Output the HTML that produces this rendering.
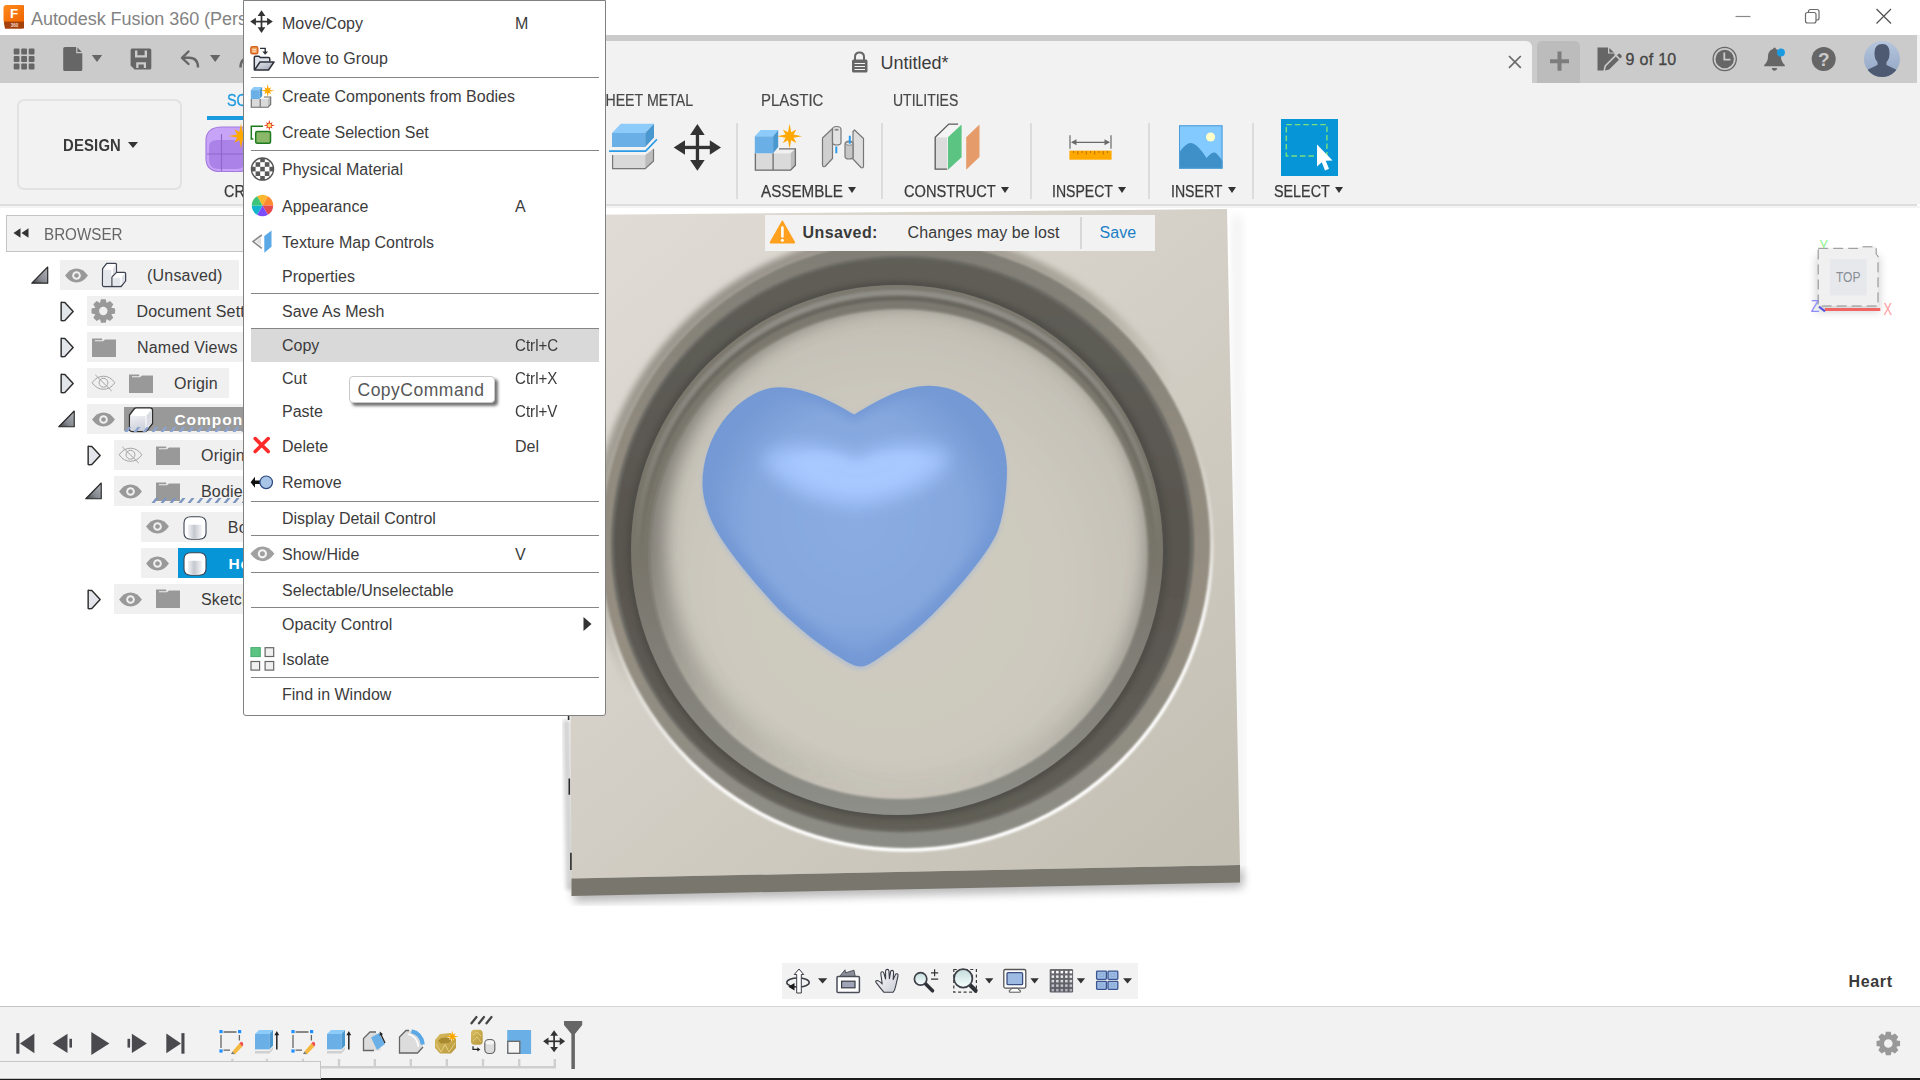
<!DOCTYPE html>
<html lang="en">
<head>
<meta charset="utf-8">
<title>Autodesk Fusion 360</title>
<style>
html,body{margin:0;padding:0;}
body{width:1920px;height:1080px;position:relative;overflow:hidden;background:#fff;font-family:"Liberation Sans",sans-serif;color:#3c3c3c;}
.abs{position:absolute;}
.t{position:absolute;white-space:nowrap;line-height:1;}
svg{position:absolute;overflow:visible;}
/* title bar */
#titlebar{left:0;top:0;width:1920px;height:35px;background:#fff;}
#qat{left:0;top:35px;width:1917px;height:48px;background:#cbcbcb;}
#tab{left:300px;top:41px;width:1232px;height:42px;background:#f2f2f2;border-radius:6px 6px 0 0;}
#plus{left:1537px;top:41px;width:43px;height:42px;background:#bcbcbc;border-radius:5px 5px 0 0;}
#ribbon{left:0;top:83px;width:1920px;height:121px;background:#f2f2f2;}
#ribline{left:0;top:204px;width:1917px;height:2px;background:#dedede;}
#ribline2{left:0;top:206px;width:1920px;height:2px;background:#f4f4f4;}
.rl{position:absolute;font-size:16px;line-height:1;white-space:nowrap;color:#3a3a3a;}
.sep{position:absolute;width:2px;background:#dcdcdc;top:123px;height:76px;}
.tri{position:absolute;width:0;height:0;border-left:4.5px solid transparent;border-right:4.5px solid transparent;border-top:6px solid #333;}
/* browser */
.brow{position:absolute;height:30px;background:#f0f0f0;}
.bt{position:absolute;font-size:16px;line-height:1;white-space:nowrap;color:#3a3a3a;letter-spacing:0.2px;}
/* menu */
#menu{left:243px;top:0;width:361px;height:714px;background:#fff;border:1px solid #808080;box-sizing:content-box;border-radius:0 0 3px 3px;}
.mi{position:absolute;left:282px;font-size:16px;line-height:1;white-space:nowrap;color:#3c3c3c;}
.ms{position:absolute;left:515px;font-size:16px;line-height:1;white-space:nowrap;color:#3c3c3c;}
.msep{position:absolute;left:250.5px;width:348px;height:1px;background:#858585;}
/* timeline */
#timeline{left:0;top:1006px;width:1920px;height:72px;background:#f2f2f2;}
#tlline{left:0;top:1006px;width:1920px;height:1px;background:#d6d6d6;}
#bottom{left:0;top:1077.5px;width:1920px;height:3px;background:#1c1c1c;}
</style>
</head>
<body>
<!--BASE-->
<div id="titlebar" class="abs"></div>
<div id="qat" class="abs"></div>
<div class="abs" style="left:1917px;top:35px;width:3px;height:48px;background:#f2f2f2"></div>
<div id="tab" class="abs"></div>
<div id="plus" class="abs"></div>
<div id="ribbon" class="abs"></div>
<div id="ribline" class="abs"></div>
<div id="ribline2" class="abs"></div>
<!--TITLE-->
<svg style="left:3px;top:4px" width="22" height="25" viewBox="0 0 22 25">
<defs><linearGradient id="gF" x1="0" y1="0" x2="1" y2="1"><stop offset="0" stop-color="#ff8a1c"/><stop offset="1" stop-color="#f06400"/></linearGradient></defs>
<path d="M1 5 L4 1.5 L21 1.5 L21 20 L19 24.5 L2 24.5 L1 20 Z" fill="#b5480a"/>
<path d="M0.5 4 Q0.5 1 3.5 1 L18 1 Q21 1 21 4 L21 17.5 L0.5 17.5 Z" fill="url(#gF)"/>
<rect x="2" y="18" width="19" height="6.5" fill="#a3400c"/>
<text x="11.2" y="14.2" font-family="Liberation Sans, sans-serif" font-weight="700" font-size="13.5" fill="#fff" text-anchor="middle">F</text>
<text x="11.5" y="23.3" font-family="Liberation Sans, sans-serif" font-weight="700" font-size="4.6" fill="#f3d9c8" text-anchor="middle">360</text>
</svg>
<div class="t" id="ttl" style="left:31px;top:9.5px;font-size:18px;color:#838383;letter-spacing:-0.05px">Autodesk Fusion 360 (Personal)</div>
<svg style="left:1730px;top:0" width="190" height="35" viewBox="0 0 190 35">
<path d="M5.5 16.5 H20.5" stroke="#8a8a8a" stroke-width="1.2" fill="none"/>
<rect x="75.5" y="12.5" width="10.5" height="10.5" rx="2" fill="none" stroke="#6a6a6a" stroke-width="1.2"/>
<path d="M78.5 12.5 V11.5 Q78.5 9.5 80.5 9.5 H87 Q89 9.5 89 11.5 V18 Q89 20 87 20 H86" fill="none" stroke="#6a6a6a" stroke-width="1.2"/>
<path d="M146.5 9 L161 23.5 M161 9 L146.5 23.5" stroke="#555" stroke-width="1.3" fill="none"/>
</svg>
<!--/TITLE-->
<!--QAT-->
<svg style="left:0;top:35px" width="260" height="48" viewBox="0 35 260 48">
<rect x="13.7" y="48.6" width="5.8" height="5.8" rx="1" fill="#666"/><rect x="21.2" y="48.6" width="5.8" height="5.8" rx="1" fill="#666"/><rect x="28.7" y="48.6" width="5.8" height="5.8" rx="1" fill="#666"/><rect x="13.7" y="56.1" width="5.8" height="5.8" rx="1" fill="#666"/><rect x="21.2" y="56.1" width="5.8" height="5.8" rx="1" fill="#666"/><rect x="28.7" y="56.1" width="5.8" height="5.8" rx="1" fill="#666"/><rect x="13.7" y="63.6" width="5.8" height="5.8" rx="1" fill="#666"/><rect x="21.2" y="63.6" width="5.8" height="5.8" rx="1" fill="#666"/><rect x="28.7" y="63.6" width="5.8" height="5.8" rx="1" fill="#666"/>
<path d="M65 47 H76.2 V53.2 H82.3 V69.4 Q82.3 70.9 80.8 70.9 H64.7 Q63.2 70.9 63.2 69.4 V48.8 Q63.2 47 65 47 Z M77.4 47.6 L81.8 52 H77.4 Z" fill="#666"/>
<path d="M91.8 55 H102.2 L97 62 Z" fill="#666"/>
<path d="M132.1 48.6 H149.8 Q151.3 48.6 151.3 50.1 V68 Q151.3 69.5 149.8 69.5 H134.6 L130.6 65.5 V50.1 Q130.6 48.6 132.1 48.6 Z M135 50.6 V57.5 H147 V50.6 H144.6 V55.3 H137.4 V50.6 Z M136.2 62.3 V68 H138.5 V64.6 H143.8 V68 H146 V62.3 Z" fill="#666" fill-rule="evenodd"/>
<path d="M188.5 51.5 L182 57.8 L188.5 64" fill="none" stroke="#666" stroke-width="2.4" stroke-linecap="round" stroke-linejoin="round"/>
<path d="M182.5 57.8 H189 Q198 57.8 198 67.5" fill="none" stroke="#666" stroke-width="2.4" stroke-linecap="butt"/>
<path d="M210 55 H220.3 L215.2 62 Z" fill="#666"/>
<path d="M240.5 67.5 Q240.5 57.8 250 57.8 H256" fill="none" stroke="#666" stroke-width="2.4"/>
</svg>
<svg style="left:850px;top:50px" width="20" height="24" viewBox="0 0 20 24">
<path d="M5 10 V7 Q5 2.5 9.5 2.5 Q14 2.5 14 7 V10" fill="none" stroke="#666" stroke-width="2"/>
<rect x="2" y="9.5" width="15.5" height="13" rx="1.5" fill="#666"/>
<path d="M4.5 13.5 H15 M4.5 16.5 H15 M4.5 19.5 H15" stroke="#f2f2f2" stroke-width="1"/>
</svg>
<div class="t" id="untitled" style="left:880.5px;top:54px;font-size:18px;color:#3c3c3c">Untitled*</div>
<svg style="left:1506px;top:53px" width="18" height="18" viewBox="0 0 18 18"><path d="M3 3 L14.8 14.8 M14.8 3 L3 14.8" stroke="#6a6a6a" stroke-width="1.7" fill="none"/></svg>
<svg style="left:1537px;top:41px" width="43" height="42" viewBox="0 0 43 42"><path d="M13 20.2 H32 M22.5 10.6 V29.7" stroke="#7d7d7d" stroke-width="4" fill="none"/></svg>
<svg style="left:1595px;top:45px" width="30" height="28" viewBox="0 0 30 28">
<path d="M2.5 2.5 H13 V8.5 H19.5 V10.5 L9.5 20.5 L8.5 25.5 H2.5 Z M14.3 3 L19 7.5 H14.3 Z" fill="#666"/>
<path d="M11 21.3 L20.8 11.5 L24 14.7 L14.2 24.5 L10 25.6 Z M22 10.3 L23.3 9 Q24.2 8.2 25.1 9 L26.5 10.4 Q27.3 11.3 26.5 12.2 L25.2 13.5 Z" fill="#666"/>
</svg>
<div class="t" id="nof" style="left:1625.5px;top:51.5px;font-size:16px;color:#444;letter-spacing:0.3px;-webkit-text-stroke:0.3px #444">9 of 10</div>
<svg style="left:1710px;top:44px" width="30" height="30" viewBox="0 0 30 30">
<circle cx="14.7" cy="15" r="11.6" fill="none" stroke="#666" stroke-width="1.3"/>
<circle cx="14.7" cy="15" r="9.2" fill="#666"/>
<path d="M14.3 8.5 V15.6 H20.5" stroke="#cbcbcb" stroke-width="1.8" fill="none"/>
</svg>
<svg style="left:1760px;top:44px" width="30" height="30" viewBox="0 0 30 30">
<path d="M14.5 3.5 Q15.8 3.5 16 5 Q21 6.5 21 12.5 Q21 18 24.8 21 V22.3 H4.2 V21 Q8 18 8 12.5 Q8 6.5 13 5 Q13.2 3.5 14.5 3.5 Z" fill="#666"/>
<path d="M11.8 24 H17.2 Q16.8 26.8 14.5 26.8 Q12.2 26.8 11.8 24 Z" fill="#666"/>
<circle cx="20.9" cy="8.6" r="4" fill="#1a9be0"/>
</svg>
<svg style="left:1810px;top:45px" width="28" height="28" viewBox="0 0 28 28">
<circle cx="13.7" cy="14" r="12" fill="#666"/>
<text x="13.7" y="20.6" font-family="Liberation Sans, sans-serif" font-weight="700" font-size="19" fill="#cbcbcb" text-anchor="middle">?</text>
</svg>
<svg style="left:1863px;top:40px" width="38" height="38" viewBox="0 0 38 38">
<defs><linearGradient id="gAv" x1="0" y1="0" x2="0" y2="1"><stop offset="0" stop-color="#b6c6de"/><stop offset="1" stop-color="#90a4c4"/></linearGradient>
<clipPath id="cAv"><circle cx="19" cy="19" r="18"/></clipPath></defs>
<circle cx="19" cy="19" r="18" fill="url(#gAv)"/>
<g clip-path="url(#cAv)"><path d="M19.5 4 Q27 4 26.5 14 Q26.3 19.5 23.5 22 V25 Q27.5 27 33 29.5 V40 H5 V29.5 Q10.5 27 14.5 25 V22 Q11.7 19.5 11.5 14 Q11 4 19.5 4 Z" fill="#4d5a72"/></g>
</svg>
<!--/QAT-->
<!--RIBBON-->
<div class="abs" style="left:17px;top:99px;width:165px;height:91px;box-sizing:border-box;border:2px solid #e2e2e2;border-radius:7px;background:#f2f2f2"></div>
<div class="t" id="design" style="left:63px;top:136.5px;font-size:16.5px;font-weight:700;color:#3a3a3a;letter-spacing:0.2px;transform:scaleX(0.9);transform-origin:0 0">DESIGN</div>
<div class="tri" style="left:127.5px;top:141.5px;border-left-width:5px;border-right-width:5px;border-top-width:6px"></div>
<div class="t" style="left:227.0px;top:92.8px;font-size:16px;color:#1e9ae0;-webkit-text-stroke:0.3px #1e9ae0;transform:scaleX(0.900);transform-origin:0 0">SOLID</div>
<div class="t" style="left:595.5px;top:92.8px;font-size:16px;color:#484848;-webkit-text-stroke:0.2px #484848;transform:scaleX(0.885);transform-origin:0 0">SHEET METAL</div>
<div class="t" style="left:761.0px;top:92.8px;font-size:16px;color:#484848;-webkit-text-stroke:0.2px #484848;transform:scaleX(0.936);transform-origin:0 0">PLASTIC</div>
<div class="t" style="left:892.8px;top:92.8px;font-size:16px;color:#484848;-webkit-text-stroke:0.2px #484848;transform:scaleX(0.874);transform-origin:0 0">UTILITIES</div>
<div class="abs" style="left:207px;top:116px;width:60px;height:4px;background:#1a9be0"></div>
<div class="t" style="left:224.0px;top:184.1px;font-size:16px;color:#3a3a3a;-webkit-text-stroke:0.25px #3a3a3a;transform:scaleX(0.900);transform-origin:0 0">CREATE</div>
<div class="t" style="left:761.0px;top:184.1px;font-size:16px;color:#3a3a3a;-webkit-text-stroke:0.25px #3a3a3a;transform:scaleX(0.950);transform-origin:0 0">ASSEMBLE</div>
<div class="tri" style="left:847.6px;top:186.5px"></div>
<div class="t" style="left:903.8px;top:184.1px;font-size:16px;color:#3a3a3a;-webkit-text-stroke:0.25px #3a3a3a;transform:scaleX(0.914);transform-origin:0 0">CONSTRUCT</div>
<div class="tri" style="left:1001.0px;top:186.5px"></div>
<div class="t" style="left:1051.9px;top:184.1px;font-size:16px;color:#3a3a3a;-webkit-text-stroke:0.25px #3a3a3a;transform:scaleX(0.878);transform-origin:0 0">INSPECT</div>
<div class="tri" style="left:1117.5px;top:186.5px"></div>
<div class="t" style="left:1170.5px;top:184.1px;font-size:16px;color:#3a3a3a;-webkit-text-stroke:0.25px #3a3a3a;transform:scaleX(0.882);transform-origin:0 0">INSERT</div>
<div class="tri" style="left:1227.5px;top:186.5px"></div>
<div class="t" style="left:1274.0px;top:184.1px;font-size:16px;color:#3a3a3a;-webkit-text-stroke:0.25px #3a3a3a;transform:scaleX(0.896);transform-origin:0 0">SELECT</div>
<div class="tri" style="left:1335.3px;top:186.5px"></div>
<div class="sep" style="left:735.5px"></div>
<div class="sep" style="left:881.0px"></div>
<div class="sep" style="left:1029.5px"></div>
<div class="sep" style="left:1148.0px"></div>
<div class="sep" style="left:1251.5px"></div>
<!--RIBICONS-->
<svg style="left:0;top:0" width="1920" height="210" viewBox="0 0 1920 210">
<defs><filter id="sb" x="-20%" y="-20%" width="140%" height="140%"><feGaussianBlur stdDeviation="0.5"/></filter></defs>
<g>
<path d="M206 141 Q206 127 222 127 H240 Q252 127 252 139 V158 Q252 171.5 238 171.5 H220 Q206 171.5 206 158 Z" fill="#c7a4f8" stroke="#a67be0" stroke-width="1.2"/>
<path d="M209 147 Q209 140 217 140 H236 Q246 140 246 148 V160 Q246 169 236 169 H219 Q209 169 209 160 Z" fill="#ab82e8"/>
<path d="M221.5 134 V171 M207 154 H250" stroke="#9068c8" stroke-width="1.2" fill="none"/>
<path d="M246 150 Q246 146 252 146 V166 Q246 166 246 160Z" fill="#9d74dc"/>
</g>
<polygon points="241.0,123.5 242.6,132.1 247.7,129.3 244.9,134.4 253.5,136.0 244.9,137.6 247.7,142.7 242.6,139.9 241.0,148.5 239.4,139.9 234.3,142.7 237.1,137.6 228.5,136.0 237.1,134.4 234.3,129.3 239.4,132.1" fill="#ffa800" filter="url(#sb)"/>
<g>
<polygon points="612,132.9 620.8,123.75 654,123.75 645.2,132.9" fill="#8ccbfa"/>
<polygon points="612,132.9 645.2,132.9 645.2,147.1 612,147.1" fill="#6ab0e6"/>
<polygon points="645.2,132.9 654,123.75 654,137.6 645.2,147.1" fill="#4a98d0"/>
<polyline points="609.1,151.1 645.6,151.1 656.9,139.4" fill="none" stroke="#2a9be8" stroke-width="1.6"/>
<polygon points="612,155.1 645.2,155.1 645.2,169.3 612,169.3" fill="#d9d9d9"/>
<polygon points="645.2,155.1 654,148.6 654,161.3 645.2,169.3" fill="#bcbcbc"/>
<polyline points="612.6,155.1 612.6,168.7 645.2,168.7 653.5,161 653.5,149" fill="none" stroke="#777" stroke-width="1.2"/>
</g>
<g fill="#333"><rect x="695.8" y="129.5" width="3.3" height="36"/><rect x="679.4" y="145.8" width="36" height="3.3"/>
<polygon points="697.4,124.1 690.1,135.0 704.7,135.0"/>
<polygon points="697.4,170.8 690.1,160.0 704.7,160.0"/>
<polygon points="673.7,147.5 685.0,140.2 685.0,154.8"/>
<polygon points="721.0,147.5 709.8,140.2 709.8,154.8"/></g>
<g>
<polygon points="754.8,153.3 773.1,153.3 773.1,170.8 754.8,170.8" fill="#dadada"/>
<polygon points="773.1,153.3 790.6,153.3 790.6,170.8 773.1,170.8" fill="#dadada"/>
<polygon points="773.1,153.3 778.2,148.2 796,148.2 790.6,153.3" fill="#f0f0f0"/>
<polygon points="790.6,153.3 796,148.2 796,165.3 790.6,170.8" fill="#bcbcbc"/>
<path d="M755.4 153.3 V170.2 H790.6 L795.4 165.3 V148.8 H779 M773.1 153.3 V170.2" fill="none" stroke="#6e6e6e" stroke-width="1.3"/>
<polygon points="754.8,136.2 773.1,136.2 773.1,153.3 754.8,153.3" fill="#6ab0e6"/>
<polygon points="754.8,136.2 760.7,130 778.2,130 773.1,136.2" fill="#8ccbfa"/>
<polygon points="773.1,136.2 778.2,130 778.2,147.1 773.1,153.3" fill="#4a98d0"/>
</g>
<polygon points="788.0,127.8 789.3,133.6 792.9,131.9 791.2,135.5 797.0,136.8 791.2,138.1 792.9,141.7 789.3,140.0 788.0,145.8 786.7,140.0 783.1,141.7 784.8,138.1 779.0,136.8 784.8,135.5 783.1,131.9 786.7,133.6" fill="#f2f2f2"/>
<polygon points="789.6,123.8 791.2,132.2 796.4,129.4 793.6,134.6 802.0,136.2 793.6,137.8 796.4,143.0 791.2,140.2 789.6,148.6 788.0,140.2 782.8,143.0 785.6,137.8 777.2,136.2 785.6,134.6 782.8,129.4 788.0,132.2" fill="#ffa800" filter="url(#sb)"/>
<g stroke="#777" stroke-width="1.2" stroke-linejoin="round">
<path d="M822.5 138 L832.5 128.5 V158.5 L825 166.5 Q822.5 167.5 822.5 164.5 Z" fill="#cfcfcf"/>
<path d="M832.5 129.5 Q832.5 126.5 836.5 126.5 Q841 126.5 841 129.5 V142.5 Q841 145 836.8 145 Q832.5 145 832.5 142.5 Z" fill="#e2e2e2"/>
<ellipse cx="836.6" cy="129.8" rx="2.2" ry="1" fill="#888" stroke="none"/>
<path d="M853 131.5 L854.5 130 L863.5 138.5 V166.5 Q863 168.5 861 167.5 L853 159 Z" fill="#dedede"/>
<path d="M845 144 Q845 141 849.5 141 Q853 141 853 144 V157 Q853 159 849 159 Q845 159 845 156.5 Z" fill="#c6c6c6"/>
<ellipse cx="849.3" cy="143.6" rx="3.3" ry="1.6" fill="#ededed" stroke-width="0.8"/>
</g>
<path d="M836.3 146.5 V153.2 M849.8 135.8 V143.8" stroke="#2a9be8" stroke-width="2" fill="none"/>
<polygon points="934.7,137.3 947.2,137.3 947.2,169.4 934.7,169.4" fill="#dcdcdc"/>
<polygon points="934.7,137.3 948.8,124.1 959.7,124.1 947.2,137.3" fill="#f4f4f4"/>
<polyline points="958.1,124.1 948.8,124.1 935.2,137.3 935.2,169.1 947.2,169.1" fill="none" stroke="#5a5a5a" stroke-width="1.3"/>
<polygon points="948.0,137.3 961.6,124.4 961.6,157.2 948.0,169.7" fill="#5bc483"/>
<polygon points="966.2,137.3 979.5,124.4 979.5,156.9 966.2,169.7" fill="#e69c6a"/>
<rect x="1069.4" y="150.6" width="42.2" height="9.1" fill="#ffa800"/>
<g stroke="#a86a00" stroke-width="0.9" fill="none"><path d="M1073.6 151 V153.0"/><path d="M1077.8 151 V154.5"/><path d="M1082.1 151 V153.0"/><path d="M1086.3 151 V154.5"/><path d="M1090.5 151 V153.0"/><path d="M1094.7 151 V154.5"/><path d="M1098.9 151 V153.0"/><path d="M1103.2 151 V154.5"/><path d="M1107.4 151 V153.0"/></g>
<path d="M1070 135.3 V148.8 M1111 135.3 V148.8 M1072 142.3 H1109" stroke="#6a6a6a" stroke-width="1.2" fill="none"/>
<path d="M1071 142.3 L1076.5 139.3 V145.3 Z M1110 142.3 L1104.5 139.3 V145.3 Z" fill="#6a6a6a"/>
<g>
<rect x="1179" y="125.3" width="43.5" height="43.3" fill="#82caff"/>
<path d="M1179 153 Q1187 141 1193 143.5 Q1199 146 1206.5 158 Q1213 150 1216.5 153.5 Q1219.5 156.5 1222.5 161 V168.6 H1179 Z" fill="#3f90c9"/>
<circle cx="1210.6" cy="137" r="4.6" fill="#ffffc8"/>
<rect x="1179.5" y="125.8" width="42.5" height="42.3" fill="none" stroke="#4a9bd6" stroke-width="1"/>
</g>
<g>
<rect x="1281" y="119" width="57" height="57" fill="#0696d7"/>
<rect x="1286.3" y="124.6" width="40.6" height="31.4" fill="none" stroke="#7be07b" stroke-width="1.4" stroke-dasharray="5.5 3"/>
<path d="M1317 144.5 L1317 166.5 L1321.8 162.2 L1325 170.5 L1329 168.8 L1325.7 160.8 L1332.5 160.5 Z" fill="#fff"/>
</g>
</svg>
<!--/RIBICONS-->
<!--/RIBBON-->
<!--MODEL-->
<svg id="model" class="abs" style="left:0;top:0" width="1920" height="1080" viewBox="0 0 1920 1080">
<defs>
<linearGradient id="gPlate" gradientUnits="userSpaceOnUse" x1="620" y1="215" x2="1180" y2="880">
<stop offset="0" stop-color="#e0dcd5"/><stop offset="0.45" stop-color="#d4d0c7"/><stop offset="1" stop-color="#c3bfb3"/>
</linearGradient>
<linearGradient id="gOuter" gradientUnits="userSpaceOnUse" x1="1010" y1="760" x2="740" y2="290">
<stop offset="0" stop-color="#9c978b" stop-opacity="0"/><stop offset="0.45" stop-color="#9c978b" stop-opacity="0"/><stop offset="0.7" stop-color="#9c978b" stop-opacity="0.75"/><stop offset="1" stop-color="#98938a" stop-opacity="1"/>
</linearGradient>
<linearGradient id="gHiL" gradientUnits="userSpaceOnUse" x1="830" y1="300" x2="980" y2="800">
<stop offset="0" stop-color="#fff" stop-opacity="0"/><stop offset="0.45" stop-color="#fff" stop-opacity="0"/><stop offset="0.66" stop-color="#fff" stop-opacity="0.4"/><stop offset="0.8" stop-color="#fff" stop-opacity="0.92"/><stop offset="1" stop-color="#fff" stop-opacity="1"/>
</linearGradient>
<linearGradient id="gCham" gradientUnits="userSpaceOnUse" x1="0" y1="238" x2="0" y2="851">
<stop offset="0" stop-color="#7f7d75"/><stop offset="0.35" stop-color="#918b7f"/><stop offset="0.65" stop-color="#958e81"/><stop offset="1" stop-color="#8b8c86"/>
</linearGradient>
<linearGradient id="gDark" gradientUnits="userSpaceOnUse" x1="0" y1="256" x2="0" y2="832">
<stop offset="0" stop-color="#5f5e58"/><stop offset="0.5" stop-color="#59564f"/><stop offset="1" stop-color="#625f58"/>
</linearGradient>
<linearGradient id="gRim" gradientUnits="userSpaceOnUse" x1="0" y1="285" x2="0" y2="815">
<stop offset="0" stop-color="#7c796f"/><stop offset="0.5" stop-color="#78746a"/><stop offset="0.85" stop-color="#86857e"/><stop offset="1" stop-color="#8e8f89"/>
</linearGradient>
<linearGradient id="gRimHi" gradientUnits="userSpaceOnUse" x1="0" y1="285" x2="0" y2="815">
<stop offset="0" stop-color="#908f88" stop-opacity="1"/><stop offset="0.3" stop-color="#908f88" stop-opacity="0.5"/><stop offset="0.5" stop-color="#908f88" stop-opacity="0"/><stop offset="1" stop-color="#908f88" stop-opacity="0"/>
</linearGradient>
<linearGradient id="gRimLo" gradientUnits="userSpaceOnUse" x1="0" y1="285" x2="0" y2="815">
<stop offset="0" stop-color="#66645c" stop-opacity="1"/><stop offset="0.3" stop-color="#66645c" stop-opacity="0.5"/><stop offset="0.55" stop-color="#66645c" stop-opacity="0"/><stop offset="1" stop-color="#66645c" stop-opacity="0"/>
</linearGradient>
<radialGradient id="gFloor" gradientUnits="userSpaceOnUse" cx="890" cy="585" r="290">
<stop offset="0" stop-color="#cfcbc0"/><stop offset="0.6" stop-color="#cdc9be"/><stop offset="0.85" stop-color="#c6c2b8"/><stop offset="1" stop-color="#bdb9af"/>
</radialGradient>
<linearGradient id="gFSh" gradientUnits="userSpaceOnUse" x1="0" y1="300" x2="0" y2="810">
<stop offset="0" stop-color="#7a776f" stop-opacity="1"/><stop offset="0.5" stop-color="#7a776f" stop-opacity="0.95"/><stop offset="0.8" stop-color="#7a776f" stop-opacity="0.35"/><stop offset="0.95" stop-color="#7a776f" stop-opacity="0.05"/><stop offset="1" stop-color="#7a776f" stop-opacity="0"/>
</linearGradient>
<clipPath id="cFloor"><ellipse cx="899" cy="554" rx="250" ry="246"/></clipPath>
<radialGradient id="gHeart" gradientUnits="userSpaceOnUse" cx="856" cy="520" r="165">
<stop offset="0" stop-color="#8aace2"/><stop offset="0.7" stop-color="#85a7de"/><stop offset="1" stop-color="#7398d3"/>
</radialGradient>
<filter id="b2" x="-5%" y="-5%" width="110%" height="110%"><feGaussianBlur stdDeviation="2"/></filter>
<filter id="b3" x="-5%" y="-5%" width="110%" height="110%"><feGaussianBlur stdDeviation="3"/></filter>
<filter id="b1" x="-5%" y="-5%" width="110%" height="110%"><feGaussianBlur stdDeviation="1"/></filter>
<filter id="b05" x="-5%" y="-5%" width="110%" height="110%"><feGaussianBlur stdDeviation="0.6"/></filter>
<filter id="b6" x="-10%" y="-10%" width="120%" height="120%"><feGaussianBlur stdDeviation="5"/></filter>
<filter id="b9" x="-20%" y="-20%" width="140%" height="140%"><feGaussianBlur stdDeviation="9"/></filter>
<clipPath id="cPlate"><polygon points="567.5,215 1227,209 1240,865 571.5,878.5"/></clipPath>
</defs>
<!-- shadow -->
<polygon points="574,884 1243,870 1243,888 574,902" fill="#000" opacity="0.28" filter="url(#b6)"/>
<polygon points="1232,215 1242,215 1245,880 1236,880" fill="#000" opacity="0.05" filter="url(#b6)"/>
<polygon points="563,720 570,720 574,890 566,890" fill="#000" opacity="0.18" filter="url(#b2)"/>
<!-- plate -->
<polygon points="567.5,215 1227,209 1240,865 571.5,878.5" fill="url(#gPlate)"/>
<polygon points="571.5,878.5 1240,865 1240,882.5 571.5,896" fill="#79766d"/>
<g clip-path="url(#cPlate)">
<ellipse cx="905" cy="544.5" rx="308" ry="307" fill="none" stroke="url(#gOuter)" stroke-width="12" filter="url(#b3)"/>
<ellipse cx="905.5" cy="544.5" rx="306" ry="305" fill="none" stroke="url(#gHiL)" stroke-width="4.5" filter="url(#b1)"/>
<ellipse cx="905.5" cy="544.5" rx="304.5" ry="303.5" fill="url(#gCham)" filter="url(#b1)"/>
<ellipse cx="902.5" cy="544" rx="291.5" ry="288.5" fill="#6d6c66" filter="url(#b1)"/>
<ellipse cx="902" cy="544" rx="288" ry="286" fill="url(#gDark)" filter="url(#b1)"/>
<ellipse cx="897.5" cy="550" rx="271" ry="269" fill="#4e4c46" filter="url(#b2)" opacity="0.8"/>
<ellipse cx="897" cy="550" rx="266" ry="265" fill="url(#gRim)" filter="url(#b05)"/>
<ellipse cx="897.5" cy="551" rx="260" ry="258.5" fill="none" stroke="url(#gRimHi)" stroke-width="5" filter="url(#b1)"/>
<ellipse cx="898" cy="552" rx="256" ry="253.5" fill="none" stroke="url(#gRimLo)" stroke-width="4" filter="url(#b1)"/>
<ellipse cx="899" cy="554" rx="249" ry="245" fill="url(#gFloor)" filter="url(#b1)"/>
<g clip-path="url(#cFloor)"><ellipse cx="906" cy="542" rx="262" ry="258" fill="none" stroke="url(#gFSh)" stroke-width="42" filter="url(#b9)" opacity="0.9"/></g>
</g>
<path d="M568.6 716 V720 M569.3 778.4 V794.7 M570.9 852.8 V870" stroke="#2a2a2a" stroke-width="1.6" fill="none"/>
<!-- heart -->
<g>
<path d="M854.2 414.5 C838 405 808 387.2 779 387.2 C748 387.2 702.5 425 702.5 485 C703 500 708 515 716 530 C728 551 750 578 779 609.6 C800 630 822 647 840 657.5 C849 663.5 855 666.5 861 666.5 C867 666.5 873 662 881 656.5 C895 647 910 636 932 615 C955 592 985 558 997 533 C1004 515 1007 490 1007 468 C1007 430 975 385.7 929 385.7 C900 385.7 872 404 854.2 414.5 Z" fill="#9db6e0" opacity="0.55" filter="url(#b2)" transform="translate(0 3)"/>
<path d="M854.2 414.5 C838 405 808 387.2 779 387.2 C748 387.2 702.5 425 702.5 485 C703 500 708 515 716 530 C728 551 750 578 779 609.6 C800 630 822 647 840 657.5 C849 663.5 855 666.5 861 666.5 C867 666.5 873 662 881 656.5 C895 647 910 636 932 615 C955 592 985 558 997 533 C1004 515 1007 490 1007 468 C1007 430 975 385.7 929 385.7 C900 385.7 872 404 854.2 414.5 Z" fill="#7499d5"/>
<path d="M854.2 414.5 C838 405 808 387.2 779 387.2 C748 387.2 702.5 425 702.5 485 C703 500 708 515 716 530 C728 551 750 578 779 609.6 C800 630 822 647 840 657.5 C849 663.5 855 666.5 861 666.5 C867 666.5 873 662 881 656.5 C895 647 910 636 932 615 C955 592 985 558 997 533 C1004 515 1007 490 1007 468 C1007 430 975 385.7 929 385.7 C900 385.7 872 404 854.2 414.5 Z" fill="url(#gHeart)" transform="translate(856 520) scale(0.93 0.92) translate(-856 -522)" filter="url(#b6)"/>
<path d="M762 458 Q800 432 856 458 Q905 432 950 454 Q938 494 858 506 Q785 500 762 458 Z" fill="#a5c6ff" filter="url(#b9)" opacity="0.95"/>
<path d="M792 460 Q822 446 857 464 Q895 446 926 458 Q912 484 858 491 Q806 486 792 460 Z" fill="#a8c9ff" filter="url(#b6)" opacity="0.9"/>
</g>
</svg>
<!--/MODEL-->
<!--BROWSER-->
<svg style="left:0;top:0" width="0" height="0"><defs>
<symbol id="eye" viewBox="0 0 26 16" overflow="visible"><path d="M0.8 8 Q6 0.6 13 0.6 Q20 0.6 25.2 8 Q20 15.4 13 15.4 Q6 15.4 0.8 8 Z" fill="#999"/><circle cx="13" cy="8" r="4.6" fill="#f0f0f0"/><circle cx="13" cy="8" r="2.5" fill="#999"/></symbol>
<symbol id="eyeoff" viewBox="0 0 26 18" overflow="visible"><path d="M1.2 9 Q6 2.2 13 2.2 Q20 2.2 24.8 9 Q20 15.8 13 15.8 Q6 15.8 1.2 9 Z" fill="none" stroke="#a0a0a0" stroke-width="1"/><circle cx="13" cy="9" r="4.6" fill="none" stroke="#a0a0a0" stroke-width="1"/><path d="M4.5 0.8 L21.5 17.6" stroke="#a0a0a0" stroke-width="1"/></symbol>
<symbol id="folder" viewBox="0 0 24 19" overflow="visible"><path d="M0 0.5 H10 L10.5 2.2 H3 V3.2 H11 L13 1.5 H24 V19 H0 Z" fill="#999"/></symbol>
<symbol id="tric" viewBox="0 0 15 21" overflow="visible"><path d="M1.2 1.5 Q1 0.8 2 1 L5 1.2 L13.6 10.4 L5 19.8 L2 20 Q1 20 1.2 19.3 Z" fill="#e2e5ea" stroke="#2e2e2e" stroke-width="1.5" stroke-linejoin="round"/></symbol>
<linearGradient id="gTri" x1="0" y1="1" x2="1" y2="0"><stop offset="0" stop-color="#3a3a3c"/><stop offset="0.4" stop-color="#85898f"/><stop offset="1" stop-color="#b4b8be"/></linearGradient>
<symbol id="trio" viewBox="0 0 18 18" overflow="visible"><path d="M0.8 17.2 H16.7 V1 Z" fill="url(#gTri)" stroke="#2a2a2a" stroke-width="1.2" stroke-linejoin="round"/></symbol>
<linearGradient id="gBody" x1="0" y1="0" x2="1" y2="0"><stop offset="0" stop-color="#f4f5f7"/><stop offset="0.45" stop-color="#c4c8cf"/><stop offset="1" stop-color="#f8f8fa"/></linearGradient>
<symbol id="body" viewBox="0 0 24 24" overflow="visible"><path d="M1 7 Q1 0.8 8 0.8 H16 Q23 0.8 23 7 V17 Q23 23.2 16 23.2 H8 Q1 23.2 1 17 Z" fill="#fff" stroke="#3d4350" stroke-width="1.1"/><path d="M4.6 8.8 H19.4 V18.5 Q19.4 22.3 12 22.3 Q4.6 22.3 4.6 18.5 Z" fill="url(#gBody)"/></symbol>
<pattern id="hatch" width="9" height="5" patternUnits="userSpaceOnUse"><path d="M0.5 5 L4.5 0 L7.5 0 L3.5 5 Z" fill="#8aa3d0"/></pattern>
<pattern id="hatch2" width="9" height="5" patternUnits="userSpaceOnUse"><path d="M0.5 5 L4.5 0 L7.5 0 L3.5 5 Z" fill="#7b94c0"/></pattern>
</defs></svg>
<div class="abs" style="left:6px;top:215px;width:300px;height:37px;box-sizing:border-box;border:1px solid #c4c4c4;background:#f2f2f2"></div>
<svg style="left:13px;top:228px" width="16" height="10" viewBox="0 0 16 10"><path d="M7.5 0.3 V9.7 L0.5 5 Z M15.5 0.3 V9.7 L8.5 5 Z" fill="#333"/></svg>
<div class="t" style="left:43.5px;top:226.7px;font-size:16px;color:#666;transform:scaleX(0.95);transform-origin:0 0">BROWSER</div>
<div class="brow" style="left:60.0px;top:260.0px;width:178.5px"></div>
<svg style="left:30.5px;top:265.5px" width="18.0" height="18.0"><use href="#trio" width="18.0" height="18.0"/></svg>
<svg style="left:64.0px;top:267.5px" width="25.0" height="15.0"><use href="#eye" width="25.0" height="15.0"/></svg>
<svg style="left:0;top:0" width="130" height="290" viewBox="0 0 130 290">
<path d="M102.6 268.7 L106.7 263.3 H115.6 Q116.4 263.3 116.4 264.3 V272.4 H124.4 Q125.6 272.4 125.6 273.5 V280.9 L121.1 286.5 H103.7 Q102.5 286.5 102.5 285 Z" fill="#fff" stroke="#3d4350" stroke-width="1.3" stroke-linejoin="round"/>
<path d="M103.6 269.8 H111.3 V285.6 H103.6 Z M112.6 277.8 H120.4 V285.6 H112.6 Z" fill="#e4e7ec"/>
<path d="M112.9 268.6 L115.7 264.8 V273 L112.9 276 Z M121.8 277 L124.9 273.4 V280.6 L121.8 284.6 Z" fill="#dde0e6"/>
<path d="M111.9 277 V286.3 M111.9 277 L116.3 272.6" stroke="#3d4350" stroke-width="1.2" fill="none"/>
</svg>
<div class="bt" style="left:147.0px;top:267.6px;">(Unsaved)</div>
<div class="brow" style="left:87.0px;top:296.0px;width:200.0px"></div>
<svg style="left:60.0px;top:300.5px" width="14.5" height="21.0"><use href="#tric" width="14.5" height="21.0"/></svg>
<svg style="left:0;top:0" width="300" height="400" viewBox="0 0 300 400"><polygon points="115.06,308.62 115.06,313.38 111.22,314.35 111.27,314.23 113.30,317.63 109.93,321.00 106.53,318.97 106.65,318.92 105.68,322.76 100.92,322.76 99.95,318.92 100.07,318.97 96.67,321.00 93.30,317.63 95.33,314.23 95.38,314.35 91.54,313.38 91.54,308.62 95.38,307.65 95.33,307.77 93.30,304.37 96.67,301.00 100.07,303.03 99.95,303.08 100.92,299.24 105.68,299.24 106.65,303.08 106.53,303.03 109.93,301.00 113.30,304.37 111.27,307.77 111.22,307.65" fill="#999"/><circle cx="103.3" cy="311.0" r="4.2" fill="#f0f0f0"/></svg>
<div class="bt" style="left:136.5px;top:303.6px;">Document Settings</div>
<div class="brow" style="left:87.0px;top:332.0px;width:200.0px"></div>
<svg style="left:60.0px;top:336.5px" width="14.5" height="21.0"><use href="#tric" width="14.5" height="21.0"/></svg>
<svg style="left:91.5px;top:337.5px" width="24.0" height="19.0"><use href="#folder" width="24.0" height="19.0"/></svg>
<div class="bt" style="left:137.0px;top:339.6px;">Named Views</div>
<div class="brow" style="left:87.0px;top:368.0px;width:142.0px"></div>
<svg style="left:60.0px;top:372.5px" width="14.5" height="21.0"><use href="#tric" width="14.5" height="21.0"/></svg>
<svg style="left:91.0px;top:374.0px" width="25.0" height="17.5"><use href="#eyeoff" width="25.0" height="17.5"/></svg>
<svg style="left:129.0px;top:373.5px" width="24.0" height="19.0"><use href="#folder" width="24.0" height="19.0"/></svg>
<div class="bt" style="left:174.0px;top:375.6px;">Origin</div>
<div class="brow" style="left:87.0px;top:404.4px;width:200.0px"></div>
<svg style="left:58.0px;top:410.4px" width="17.5" height="17.5"><use href="#trio" width="17.5" height="17.5"/></svg>
<svg style="left:91.0px;top:411.6px" width="25.0" height="15.0"><use href="#eye" width="25.0" height="15.0"/></svg>
<div class="abs" style="left:124.4px;top:407.2px;width:160px;height:23.4px;background:#999"></div>
<svg style="left:128px;top:406.5px" width="26" height="26" viewBox="0 0 26 26"><defs><linearGradient id="gCube" x1="0" y1="0" x2="0.3" y2="1"><stop offset="0" stop-color="#eef0f4"/><stop offset="1" stop-color="#cfd3db"/></linearGradient></defs><path d="M1.5 8 L6.5 1.5 Q7.3 0.8 8.5 0.8 H22 Q24.5 0.8 24.5 3.3 V16.5 L19 23.5 Q18 24.5 16.5 24.5 H4 Q1.5 24.5 1.5 22 Z" fill="#fff" stroke="#2e2e2e" stroke-width="1.3" stroke-linejoin="round"/><path d="M3 9 H17.5 V23 H4.5 Q3 23 3 21.5 Z" fill="url(#gCube)"/><path d="M18.5 8.5 L23.3 3 V16 L18.5 22 Z" fill="#d9dce3"/></svg>
<svg style="left:124px;top:426.5px" width="160" height="5" viewBox="0 0 160 5"><rect x="0" y="0" width="160" height="5" fill="url(#hatch)"/></svg>
<div class="bt" style="left:174.4px;top:411.6px;color:#fff;font-weight:700;font-size:15.5px;letter-spacing:1px">Component1:1</div>
<div class="brow" style="left:114.0px;top:440.3px;width:200.0px"></div>
<svg style="left:87.0px;top:445.3px" width="14.5" height="21.0"><use href="#tric" width="14.5" height="21.0"/></svg>
<svg style="left:118.0px;top:446.3px" width="25.0" height="17.5"><use href="#eyeoff" width="25.0" height="17.5"/></svg>
<svg style="left:156.0px;top:445.6px" width="24.0" height="19.0"><use href="#folder" width="24.0" height="19.0"/></svg>
<div class="bt" style="left:201.0px;top:447.9px;">Origin</div>
<div class="brow" style="left:114.0px;top:476.3px;width:200.0px"></div>
<svg style="left:85.0px;top:482.3px" width="17.5" height="17.5"><use href="#trio" width="17.5" height="17.5"/></svg>
<svg style="left:118.0px;top:483.5px" width="25.0" height="15.0"><use href="#eye" width="25.0" height="15.0"/></svg>
<svg style="left:156.0px;top:481.5px" width="24.0" height="19.0"><use href="#folder" width="24.0" height="19.0"/></svg>
<div class="bt" style="left:201.0px;top:483.9px;">Bodies</div>
<svg style="left:150.5px;top:498.2px" width="140" height="5" viewBox="0 0 140 5"><rect x="0" y="0" width="140" height="5" fill="url(#hatch2)"/></svg>
<div class="brow" style="left:141.0px;top:512.2px;width:200.0px"></div>
<svg style="left:145.0px;top:519.4px" width="25.0" height="15.0"><use href="#eye" width="25.0" height="15.0"/></svg>
<svg style="left:183.0px;top:515.5px" width="24.0" height="24.0"><use href="#body" width="24.0" height="24.0"/></svg>
<div class="bt" style="left:227.8px;top:519.8px;">Body1</div>
<div class="brow" style="left:141.0px;top:548.3px;width:40.0px"></div>
<div class="abs" style="left:178.3px;top:548.3px;width:120px;height:30px;background:#0696d7"></div>
<svg style="left:145.0px;top:555.5px" width="25.0" height="15.0"><use href="#eye" width="25.0" height="15.0"/></svg>
<svg style="left:183.0px;top:551.6px" width="24.0" height="24.0"><use href="#body" width="24.0" height="24.0"/></svg>
<div class="bt" style="left:228.5px;top:555.9px;color:#fff;font-weight:700;font-size:15.5px;letter-spacing:0.9px">Heart</div>
<div class="brow" style="left:114.0px;top:584.4px;width:200.0px"></div>
<svg style="left:87.0px;top:589.4px" width="14.5" height="21.0"><use href="#tric" width="14.5" height="21.0"/></svg>
<svg style="left:118.0px;top:591.6px" width="25.0" height="15.0"><use href="#eye" width="25.0" height="15.0"/></svg>
<svg style="left:156.0px;top:589.4px" width="24.0" height="19.0"><use href="#folder" width="24.0" height="19.0"/></svg>
<div class="bt" style="left:201.0px;top:592.0px;">Sketches</div>
<!--/BROWSER-->
<!--CANVASUI-->
<div class="abs" style="left:765px;top:215px;width:390px;height:36px;background:#f2f2f2"></div>
<div class="abs" style="left:1079.5px;top:217px;width:2px;height:32px;background:#d8d8d8"></div>
<svg style="left:768px;top:219px" width="30" height="28" viewBox="0 0 30 28"><path d="M13.6 2.2 Q14.4 1 15.2 2.2 L27 23 Q27.6 24.6 26 24.6 H2.8 Q1.2 24.6 1.8 23 Z" fill="#ffa01e"/><path d="M14.4 8.5 V17.5" stroke="#fff" stroke-width="2.6" stroke-linecap="round"/><circle cx="14.4" cy="21.2" r="1.5" fill="#fff"/></svg>
<div class="t" style="left:802.6px;top:225.4px;font-size:16px;font-weight:700;color:#3a3a3a;letter-spacing:0.4px">Unsaved:</div>
<div class="t" style="left:907.6px;top:225.4px;font-size:16px;color:#3a3a3a;letter-spacing:0.09px">Changes may be lost</div>
<div class="t" style="left:1099.5px;top:225.4px;font-size:16px;color:#1a80c6;letter-spacing:0.1px">Save</div>
<svg style="left:1780px;top:225px" width="140" height="110" viewBox="1780 225 140 110">
<defs><filter id="vb" x="-30%" y="-30%" width="160%" height="160%"><feGaussianBlur stdDeviation="4"/></filter></defs>
<rect x="1816" y="256" width="64" height="56" fill="#000" opacity="0.16" filter="url(#vb)"/>
<path d="M1818.2 248.3 H1858 L1859.5 246.8 H1876.2 V254.5 L1878 256 V306 H1818.2 Z" fill="#f0f0f0" stroke="#8c8c8c" stroke-width="1" stroke-dasharray="10 5"/>
<rect x="1829.9" y="259.1" width="36.7" height="36.2" fill="#e6e8ec"/>
<text x="1848.2" y="282" font-family="Liberation Sans, sans-serif" font-size="15.5" fill="#8a8e96" text-anchor="middle" textLength="24.5" lengthAdjust="spacingAndGlyphs">TOP</text>
<path d="M1824.8 309.5 H1880.3" stroke="#f06464" stroke-width="3"/>
<path d="M1819 306.6 L1825 311.4" stroke="#5555e0" stroke-width="2"/>
<text x="1883.6" y="314.8" font-family="Liberation Sans, sans-serif" font-size="17" fill="#ff9c9c" textLength="8.6" lengthAdjust="spacingAndGlyphs">X</text>
<text x="1810.8" y="312.4" font-family="Liberation Sans, sans-serif" font-size="16" fill="#8c8cff" textLength="8.5" lengthAdjust="spacingAndGlyphs">Z</text>
<clipPath id="cY"><rect x="1815" y="238" width="20" height="10"/></clipPath>
<text x="1819.4" y="252" font-family="Liberation Sans, sans-serif" font-size="16" fill="#8ff08f" clip-path="url(#cY)" textLength="8.5" lengthAdjust="spacingAndGlyphs">Y</text>
</svg>
<div class="t" style="left:1848.5px;top:973.8px;font-size:16px;font-weight:700;color:#3a3a3a;letter-spacing:0.65px">Heart</div>
<!--NAVBAR-->
<div class="abs" style="left:782px;top:963px;width:356px;height:36px;background:#f2f2f2"></div>
<svg style="left:780px;top:955px" width="370" height="50" viewBox="780 955 370 50">
<defs><linearGradient id="gLens" x1="0" y1="0" x2="0" y2="1"><stop offset="0" stop-color="#c4dcdc"/><stop offset="1" stop-color="#f8ffff"/></linearGradient>
<linearGradient id="gGrid" x1="0" y1="0" x2="0" y2="1"><stop offset="0" stop-color="#6a6a6e"/><stop offset="1" stop-color="#5a5c66"/></linearGradient>
<linearGradient id="gDot" x1="0" y1="0" x2="0" y2="1"><stop offset="0" stop-color="#ffffff"/><stop offset="1" stop-color="#9aa0b0"/></linearGradient>
<linearGradient id="gHand" x1="0" y1="0" x2="1" y2="1"><stop offset="0" stop-color="#ffffff"/><stop offset="1" stop-color="#c8ccd4"/></linearGradient></defs>
<ellipse cx="798" cy="982.5" rx="11.2" ry="4.6" fill="none" stroke="#3a3d45" stroke-width="1.5"/>
<path d="M796.7 993 V974.5 H794.3 L799 969 L803.7 974.5 H801.3 V993 Z" fill="#fff" stroke="#3a3d45" stroke-width="1" stroke-linejoin="round"/>
<path d="M788.3 986.8 L794.5 983 V990.6 Z" fill="#1a1a1a"/>
<path d="M818.0 978.2 H827.3 L822.6 983.4 Z" fill="#333"/>
<path d="M839.5 976.5 L845 969.8 L845.6 972.8 L854 970.2 L855.3 976.5 Z" fill="#8a8e98" stroke="#3a3d45" stroke-width="0.8"/>
<rect x="837" y="976.6" width="22.4" height="15.8" rx="1" fill="#fff" stroke="#4a4d58" stroke-width="1.5"/>
<rect x="841.6" y="981.2" width="13.4" height="6.6" fill="#a0a6b8" stroke="#3a3d45" stroke-width="1.2"/>
<path d="M884 992.3 Q879.5 987 876 982.3 Q875.2 980.6 877 980.5 Q879 980.5 882.2 984 L880.8 973.5 Q880.8 971.8 882.2 971.8 Q883.5 971.8 884 973.5 L885.6 979 L885.6 971 Q885.8 969.4 887.3 969.4 Q888.7 969.4 888.9 971 L889.4 978.6 L890.6 971.6 Q891 970.2 892.3 970.4 Q893.6 970.6 893.6 972.2 L893.2 979.6 L895.4 974.6 Q896 973.4 897.2 973.8 Q898.3 974.3 898 975.8 L895.6 986.5 Q895 990 893 992.3 Z" fill="url(#gHand)" stroke="#3a3d48" stroke-width="1.1" stroke-linejoin="round"/>
<path d="M925.5 983.8 L932.5 990.8" stroke="#2e3038" stroke-width="3.6" stroke-linecap="round"/>
<circle cx="920.6" cy="978.9" r="6.2" fill="url(#gLens)" stroke="#3e4048" stroke-width="1.7"/>
<path d="M931 972.8 H938.2 M934.6 969.3 V976.3 M931 979.2 H938.2" stroke="#333" stroke-width="1.2" fill="none"/>
<rect x="953.8" y="969.5" width="22.6" height="22.6" fill="none" stroke="#3a3a3a" stroke-width="1.2" stroke-dasharray="3 2.5"/>
<path d="M970.5 985.6 L975.6 990.6" stroke="#2e3038" stroke-width="4.2" stroke-linecap="round"/>
<circle cx="963.2" cy="978.4" r="9.2" fill="url(#gLens)" stroke="#3e4048" stroke-width="1.8"/>
<path d="M985.1 978.2 H993.4 L989.2 983.4 Z" fill="#333"/>
<rect x="1003.8" y="969.5" width="22" height="18.6" rx="1.5" fill="#fff" stroke="#555" stroke-width="1.3"/>
<rect x="1007" y="972.7" width="15.6" height="12" rx="1" fill="#9dbbe3" stroke="#3a4f80" stroke-width="1.3"/>
<path d="M1011.5 988.3 H1018 L1019 990.2 H1020.3 V992.2 H1009.3 V990.2 H1010.5 Z" fill="#fff" stroke="#555" stroke-width="1"/>
<path d="M1030.4 978.2 H1038.8 L1034.6 983.4 Z" fill="#333"/>
<rect x="1049.7" y="969" width="23.4" height="23.5" rx="1.2" fill="url(#gGrid)"/>
<rect x="1051.60" y="970.90" width="2.5" height="2.5" fill="#fff" opacity="1.00"/><rect x="1056.10" y="970.90" width="2.5" height="2.5" fill="#fff" opacity="1.00"/><rect x="1060.60" y="970.90" width="2.5" height="2.5" fill="#fff" opacity="1.00"/><rect x="1065.10" y="970.90" width="2.5" height="2.5" fill="#fff" opacity="1.00"/><rect x="1069.60" y="970.90" width="2.5" height="2.5" fill="#fff" opacity="1.00"/><rect x="1051.60" y="975.40" width="2.5" height="2.5" fill="#fff" opacity="0.88"/><rect x="1056.10" y="975.40" width="2.5" height="2.5" fill="#fff" opacity="0.88"/><rect x="1060.60" y="975.40" width="2.5" height="2.5" fill="#fff" opacity="0.88"/><rect x="1065.10" y="975.40" width="2.5" height="2.5" fill="#fff" opacity="0.88"/><rect x="1069.60" y="975.40" width="2.5" height="2.5" fill="#fff" opacity="0.88"/><rect x="1051.60" y="979.90" width="2.5" height="2.5" fill="#fff" opacity="0.76"/><rect x="1056.10" y="979.90" width="2.5" height="2.5" fill="#fff" opacity="0.76"/><rect x="1060.60" y="979.90" width="2.5" height="2.5" fill="#fff" opacity="0.76"/><rect x="1065.10" y="979.90" width="2.5" height="2.5" fill="#fff" opacity="0.76"/><rect x="1069.60" y="979.90" width="2.5" height="2.5" fill="#fff" opacity="0.76"/><rect x="1051.60" y="984.40" width="2.5" height="2.5" fill="#fff" opacity="0.64"/><rect x="1056.10" y="984.40" width="2.5" height="2.5" fill="#fff" opacity="0.64"/><rect x="1060.60" y="984.40" width="2.5" height="2.5" fill="#fff" opacity="0.64"/><rect x="1065.10" y="984.40" width="2.5" height="2.5" fill="#fff" opacity="0.64"/><rect x="1069.60" y="984.40" width="2.5" height="2.5" fill="#fff" opacity="0.64"/><rect x="1051.60" y="988.90" width="2.5" height="2.5" fill="#fff" opacity="0.52"/><rect x="1056.10" y="988.90" width="2.5" height="2.5" fill="#fff" opacity="0.52"/><rect x="1060.60" y="988.90" width="2.5" height="2.5" fill="#fff" opacity="0.52"/><rect x="1065.10" y="988.90" width="2.5" height="2.5" fill="#fff" opacity="0.52"/><rect x="1069.60" y="988.90" width="2.5" height="2.5" fill="#fff" opacity="0.52"/>
<path d="M1076.8 978.2 H1085.1 L1080.9 983.4 Z" fill="#333"/>
<rect x="1096.6" y="971.2" width="9.8" height="8.1" rx="0.8" fill="#9dbbe3" stroke="#3a5590" stroke-width="1.3"/><rect x="1099.5" y="973.9" width="4" height="2.6" fill="none" stroke="#86a6d6" stroke-width="0.7"/>
<rect x="1108.0" y="971.2" width="9.8" height="8.1" rx="0.8" fill="#9dbbe3" stroke="#3a5590" stroke-width="1.3"/><rect x="1110.9" y="973.9" width="4" height="2.6" fill="none" stroke="#86a6d6" stroke-width="0.7"/>
<rect x="1096.6" y="981.3" width="9.8" height="8.1" rx="0.8" fill="#9dbbe3" stroke="#3a5590" stroke-width="1.3"/><rect x="1099.5" y="984.0" width="4" height="2.6" fill="none" stroke="#86a6d6" stroke-width="0.7"/>
<rect x="1108.0" y="981.3" width="9.8" height="8.1" rx="0.8" fill="#9dbbe3" stroke="#3a5590" stroke-width="1.3"/><rect x="1110.9" y="984.0" width="4" height="2.6" fill="none" stroke="#86a6d6" stroke-width="0.7"/>
<path d="M1123.1 978.2 H1132.0 L1127.5 983.4 Z" fill="#333"/>
</svg>
<!--/NAVBAR-->
<!--/CANVASUI-->
<div id="timeline" class="abs"></div>
<div id="tlline" class="abs"></div>
<div id="bottom" class="abs"></div>
<!--TIMELINE-->
<svg style="left:0;top:1000px" width="620" height="80" viewBox="0 1000 620 80">
<defs><linearGradient id="gGold" x1="0" y1="0" x2="1" y2="1"><stop offset="0" stop-color="#d8bc60"/><stop offset="1" stop-color="#b8983c"/></linearGradient></defs>
<rect x="-1" y="1061.5" width="321.5" height="17" fill="#f2f2f2" stroke="#c6c6c6" stroke-width="1"/>
<path d="M0 1006.5 H200" stroke="#c4c4c4" stroke-width="1"/>
<path d="M321 1067.3 H556" stroke="#cfcfcf" stroke-width="2.6"/>
<path d="M339.0 1059 V1067.5" stroke="#cfcfcf" stroke-width="2.4"/>
<path d="M374.8 1059 V1067.5" stroke="#cfcfcf" stroke-width="2.4"/>
<path d="M410.8 1059 V1067.5" stroke="#cfcfcf" stroke-width="2.4"/>
<path d="M446.8 1059 V1067.5" stroke="#cfcfcf" stroke-width="2.4"/>
<path d="M483.0 1059 V1067.5" stroke="#cfcfcf" stroke-width="2.4"/>
<path d="M519.2 1059 V1067.5" stroke="#cfcfcf" stroke-width="2.4"/>
<path d="M554.8 1059 V1067.5" stroke="#cfcfcf" stroke-width="2.4"/>
<path d="M232.4 1058.7 V1061" stroke="#cfcfcf" stroke-width="2.2"/>
<path d="M266.8 1058.7 V1061" stroke="#cfcfcf" stroke-width="2.2"/>
<path d="M303.0 1058.7 V1061" stroke="#cfcfcf" stroke-width="2.2"/>
<g fill="#4a4a4e">
<rect x="16.3" y="1033.1" width="3.1" height="20.6"/><path d="M34.4 1033.6 V1053.2 L20 1043.4 Z"/>
<path d="M67.5 1033.8 V1053 L52.5 1043.4 Z"/><rect x="69.4" y="1038.8" width="2.6" height="8.8"/>
<path d="M91.3 1031.9 V1055 L109.4 1043.4 Z"/>
<rect x="127.5" y="1038.8" width="2.6" height="8.8"/><path d="M131.9 1033.8 V1053 L146.9 1043.4 Z"/>
<path d="M166.3 1033.6 V1053.2 L181 1043.4 Z"/><rect x="181.4" y="1033.1" width="3.1" height="20.6"/>
</g>
<g>
<path d="M223.5 1032 H236.5 M221.0 1035 V1048 M239.4 1035 V1040.5 M223.5 1050.2 H230.0" stroke="#666" stroke-width="1.3" fill="none"/>
<rect x="219.4" y="1030" width="3.2" height="3.2" fill="#1e90ff"/><rect x="238.0" y="1030" width="3.2" height="3.2" fill="#1e90ff"/><rect x="219.4" y="1049.4" width="3.2" height="3.2" fill="#1e90ff"/>
<path d="M232.5 1051.5 L239.4 1043.2 L242.4 1046.4 L235.0 1054.2 Z" fill="#f5b940"/>
<path d="M239.4 1043.4 Q241.5 1040.5 243.0 1043 Q243.8 1046 242.4 1046.5 Z" fill="#f05050"/>
<path d="M232.5 1051.5 L235.0 1054.2 L231.0 1054 Z" fill="#777"/>
</g>
<g>
<polygon points="255.0,1051 269.5,1051 273.0,1047 273.0,1049.6 269.5,1053.6 255.0,1053.6" fill="#d0d0d0"/>
<polygon points="255.0,1034 269.5,1034 269.5,1049.4 255.0,1049.4" fill="#6ab0e6"/>
<polygon points="255.0,1034 259.0,1030 273.0,1030 269.5,1034" fill="#8ccbfa"/>
<polygon points="269.5,1034 273.0,1030 273.0,1045.4 269.5,1049.4" fill="#4a98d0"/>
<path d="M276.8 1049.5 V1033" stroke="#222" stroke-width="1.5"/><path d="M276.8 1031 L274.4 1035.2 H279.2 Z" fill="#222"/>
</g>
<g>
<path d="M295.5 1032 H308.5 M293.0 1035 V1048 M311.4 1035 V1040.5 M295.5 1050.2 H302.0" stroke="#666" stroke-width="1.3" fill="none"/>
<rect x="291.4" y="1030" width="3.2" height="3.2" fill="#1e90ff"/><rect x="310.0" y="1030" width="3.2" height="3.2" fill="#1e90ff"/><rect x="291.4" y="1049.4" width="3.2" height="3.2" fill="#1e90ff"/>
<path d="M304.5 1051.5 L311.4 1043.2 L314.4 1046.4 L307.0 1054.2 Z" fill="#f5b940"/>
<path d="M311.4 1043.4 Q313.5 1040.5 315.0 1043 Q315.8 1046 314.4 1046.5 Z" fill="#f05050"/>
<path d="M304.5 1051.5 L307.0 1054.2 L303.0 1054 Z" fill="#777"/>
</g>
<g>
<polygon points="327.0,1051 341.5,1051 345.0,1047 345.0,1049.6 341.5,1053.6 327.0,1053.6" fill="#d0d0d0"/>
<polygon points="327.0,1034 341.5,1034 341.5,1049.4 327.0,1049.4" fill="#6ab0e6"/>
<polygon points="327.0,1034 331.0,1030 345.0,1030 341.5,1034" fill="#8ccbfa"/>
<polygon points="341.5,1034 345.0,1030 345.0,1045.4 341.5,1049.4" fill="#4a98d0"/>
<path d="M348.8 1049.5 V1033" stroke="#222" stroke-width="1.5"/><path d="M348.8 1031 L346.4 1035.2 H351.2 Z" fill="#222"/>
</g>
<g><path d="M363.5 1050.5 V1038.5 L370 1032 H376 L381 1050.5 Z" fill="#dcdcdc"/><path d="M376 1032 H370 L363.5 1038.5 V1050.5 H374" fill="none" stroke="#666" stroke-width="1.3"/>
<polygon points="371,1037.5 379,1033 385,1044 377,1050" fill="#6ab0e6"/>
<path d="M385 1043 L380.5 1033.5" stroke="#222" stroke-width="1.3"/><path d="M379.8 1031.5 L383 1034.2 L379.6 1035.8 Z" fill="#222"/></g>
<g><path d="M399.5 1053 V1037 L406 1030.5 H410 Q423 1032 423 1046 L417.5 1053 Z" fill="#dcdcdc"/>
<path d="M409 1030.5 H406 L399.5 1037 V1053 H417.5 L423 1047" fill="none" stroke="#666" stroke-width="1.3"/>
<path d="M411.5 1031.3 Q421.5 1033.5 422.8 1044.5" fill="none" stroke="#5aa9e6" stroke-width="4"/>
<path d="M408 1034 Q417 1036 418.5 1047" fill="none" stroke="#fff" stroke-width="1.5"/></g>
<g><path d="M435 1040 L440 1034 L451 1033 L456 1039 V1048 L451 1053.5 H440 L435 1048 Z" fill="url(#gGold)"/>
<path d="M438 1041 L441 1038 L449 1037.5 L451.5 1040.5 L448.5 1043 L441 1043.5 Z" fill="#a88a30"/>
<path d="M436 1044 L441 1052 L445 1044.5 L449 1052 L455 1043" fill="none" stroke="#e8d488" stroke-width="0.9"/></g>
<polygon points="451.5,1032.6 452.3,1035.4 454.0,1034.7 453.3,1036.4 456.1,1037.2 453.3,1038.0 454.0,1039.7 452.3,1039.0 451.5,1041.8 450.7,1039.0 449.0,1039.7 449.7,1038.0 446.9,1037.2 449.7,1036.4 449.0,1034.7 450.7,1035.4" fill="#f2f2f2"/>
<polygon points="452.3,1030.6 453.1,1034.6 455.6,1033.3 454.3,1035.8 458.3,1036.6 454.3,1037.4 455.6,1039.9 453.1,1038.6 452.3,1042.6 451.5,1038.6 449.0,1039.9 450.3,1037.4 446.3,1036.6 450.3,1035.8 449.0,1033.3 451.5,1034.6" fill="#ffa800"/>
<g><rect x="471" y="1029.8" width="11.7" height="15" rx="3.5" fill="url(#gGold)"/>
<path d="M473 1035 L477 1032 L481 1036 M473 1041 L477 1037 L481 1042" fill="none" stroke="#e8d488" stroke-width="0.8"/>
<path d="M473 1046.3 V1049.4 H478" fill="none" stroke="#222" stroke-width="1.2"/><path d="M480.3 1049.4 L477.3 1047.2 V1051.6 Z" fill="#222"/>
<rect x="484.8" y="1039.5" width="10" height="14" rx="4" fill="#dcdcdc" stroke="#666" stroke-width="1.2"/><ellipse cx="489.8" cy="1042.5" rx="4.3" ry="2" fill="#f4f4f4"/>
<path d="M471.5 1023.3 L476.5 1017 M479 1023.3 L484 1017 M486.5 1023.3 L491.5 1017" stroke="#444" stroke-width="2.2" stroke-linecap="round"/></g>
<rect x="507.2" y="1030" width="23.9" height="24" fill="#6ab0e6"/><rect x="507.8" y="1041.3" width="12" height="12" fill="#f4f4f4" stroke="#666" stroke-width="1.3"/>
<g fill="#333"><rect x="553.25" y="1032.30" width="1.7" height="18"/><rect x="545.10" y="1040.45" width="18" height="1.7"/>
<polygon points="554.1,1030.3 558.0,1035.7 550.2,1035.7"/>
<polygon points="554.1,1052.3 550.2,1046.9 558.0,1046.9"/>
<polygon points="543.1,1041.3 548.5,1037.4 548.5,1045.2"/>
<polygon points="565.1,1041.3 559.7,1045.2 559.7,1037.4"/>
</g>
<path d="M564 1021 H582.2 V1025 L574.9 1034 V1068.9 H571.4 V1034 L564 1025 Z" fill="#666"/>
</svg>
<svg style="left:1860px;top:1020px" width="50" height="50" viewBox="1860 1020 50 50"><polygon points="1900.06,1041.12 1900.06,1045.88 1896.22,1046.85 1896.27,1046.73 1898.30,1050.13 1894.93,1053.50 1891.53,1051.47 1891.65,1051.42 1890.68,1055.26 1885.92,1055.26 1884.95,1051.42 1885.07,1051.47 1881.67,1053.50 1878.30,1050.13 1880.33,1046.73 1880.38,1046.85 1876.54,1045.88 1876.54,1041.12 1880.38,1040.15 1880.33,1040.27 1878.30,1036.87 1881.67,1033.50 1885.07,1035.53 1884.95,1035.58 1885.92,1031.74 1890.68,1031.74 1891.65,1035.58 1891.53,1035.53 1894.93,1033.50 1898.30,1036.87 1896.27,1040.27 1896.22,1040.15" fill="#999"/><circle cx="1888.3" cy="1043.5" r="4.3" fill="#f2f2f2"/></svg>
<!--/TIMELINE-->
<!--MENU-->
<div id="menu" class="abs"></div>
<div class="abs" style="left:251px;top:329px;width:348px;height:32.5px;background:#d9d9d9"></div>
<div class="msep" style="top:77px"></div>
<div class="msep" style="top:150px"></div>
<div class="msep" style="top:293px"></div>
<div class="msep" style="top:328px"></div>
<div class="msep" style="top:501px"></div>
<div class="msep" style="top:535px"></div>
<div class="msep" style="top:572px"></div>
<div class="msep" style="top:607px"></div>
<div class="msep" style="top:677px"></div>
<div class="mi" style="top:15.5px">Move/Copy</div>
<div class="ms" style="top:15.5px">M</div>
<div class="mi" style="top:51.4px">Move to Group</div>
<div class="mi" style="top:88.8px">Create Components from Bodies</div>
<div class="mi" style="top:124.8px">Create Selection Set</div>
<div class="mi" style="top:162.4px">Physical Material</div>
<div class="mi" style="top:198.6px">Appearance</div>
<div class="ms" style="top:198.6px">A</div>
<div class="mi" style="top:234.5px">Texture Map Controls</div>
<div class="mi" style="top:269.0px">Properties</div>
<div class="mi" style="top:303.7px">Save As Mesh</div>
<div class="mi" style="top:338.1px">Copy</div>
<div class="ms" style="top:338.1px;transform:scaleX(0.945);transform-origin:0 0">Ctrl+C</div>
<div class="mi" style="top:371.1px">Cut</div>
<div class="ms" style="top:371.1px;transform:scaleX(0.945);transform-origin:0 0">Ctrl+X</div>
<div class="mi" style="top:404.3px">Paste</div>
<div class="ms" style="top:404.3px;transform:scaleX(0.945);transform-origin:0 0">Ctrl+V</div>
<div class="mi" style="top:438.6px">Delete</div>
<div class="ms" style="top:438.6px">Del</div>
<div class="mi" style="top:474.7px">Remove</div>
<div class="mi" style="top:510.8px">Display Detail Control</div>
<div class="mi" style="top:546.7px">Show/Hide</div>
<div class="ms" style="top:546.7px">V</div>
<div class="mi" style="top:582.9px">Selectable/Unselectable</div>
<div class="mi" style="top:617.4px">Opacity Control</div>
<div class="mi" style="top:651.9px">Isolate</div>
<div class="mi" style="top:687.4px">Find in Window</div>
<svg style="left:583px;top:617px" width="9" height="14" viewBox="0 0 9 14"><path d="M0.5 0 L8.5 7 L0.5 14 Z" fill="#333"/></svg>
<div class="abs" style="left:348.5px;top:376px;width:146px;height:27px;background:#fff;border:1px solid #c9c9c9;border-radius:4px;box-sizing:border-box;box-shadow:3px 3px 3px rgba(0,0,0,0.55)"></div>
<div class="t" id="tip" style="left:357.5px;top:381.8px;font-size:17.5px;color:#575757;letter-spacing:0.5px">CopyCommand</div>
<svg style="left:0;top:0" width="300" height="720" viewBox="0 0 300 720">
<defs><filter id="sb2" x="-20%" y="-20%" width="140%" height="140%"><feGaussianBlur stdDeviation="0.35"/></filter><clipPath id="cSph"><circle cx="262.5" cy="169.1" r="11"/></clipPath><linearGradient id="gFold" x1="0" y1="0" x2="1" y2="1"><stop offset="0" stop-color="#e6e9ee"/><stop offset="1" stop-color="#9ea6b4"/></linearGradient></defs>
<g fill="#333"><rect x="260.65" y="12.60" width="1.7" height="18"/><rect x="252.50" y="20.75" width="18" height="1.7"/>
<polygon points="261.5,10.3 265.4,16.0 257.6,16.0"/>
<polygon points="261.5,32.9 257.6,27.2 265.4,27.2"/>
<polygon points="250.2,21.6 255.9,17.7 255.9,25.5"/>
<polygon points="272.8,21.6 267.1,25.5 267.1,17.7"/>
</g>
<rect x="250.8" y="46.8" width="7" height="7" rx="1.5" fill="#f2a260" stroke="#d2641e" stroke-width="1.4"/>
<path d="M252.5 49.5 H256 M252.5 51.3 H256" stroke="#fff0e0" stroke-width="0.8"/>
<path d="M260 48.4 H265.2 V52" fill="none" stroke="#2d3038" stroke-width="1.4"/><path d="M262.3 51.6 H268.1 L265.2 54.8 Z" fill="#2d3038"/>
<path d="M254.3 69.8 V57.5 Q254.3 56.2 255.6 56.2 H259 L260.3 57.6 H268.5 Q269.8 57.6 269.8 59 V61.5" fill="#dfe3ea" stroke="#2d3038" stroke-width="1.5" stroke-linejoin="round"/>
<path d="M254.5 70 L260 62 H274 L268.5 70 Z" fill="url(#gFold)" stroke="#2d3038" stroke-width="1.5" stroke-linejoin="round"/>
<polygon points="250.8,99.1 260.2,99.1 260.2,107.5 250.8,107.5" fill="#dadada"/>
<polygon points="260.2,99.1 268,99.1 271,96.5 271,104.5 268,107.5 260.2,107.5" fill="#dadada"/>
<polygon points="260.2,99.1 263,96.5 271,96.5 268,99.1" fill="#f2f2f2"/>
<polygon points="268,99.1 271,96.5 271,104.5 268,107.5" fill="#bdbdbd"/>
<path d="M251.3 99.1 V107.2 H268 L270.7 104.5 V97 H264 M260.2 99.1 V107.2" fill="none" stroke="#6e6e6e" stroke-width="1.1"/>
<polygon points="250.8,90.1 259.6,90.1 259.6,99.1 250.8,99.1" fill="#6ab0e6"/>
<polygon points="250.8,90.1 253.6,87.1 262.2,87.1 259.6,90.1" fill="#8ccbfa"/>
<polygon points="259.6,90.1 262.2,87.1 262.2,96 259.6,99.1" fill="#4a98d0"/>
<polygon points="267.0,86.0 267.8,89.2 269.8,88.4 269.0,90.4 272.2,91.2 269.0,92.0 269.8,94.0 267.8,93.2 267.0,96.4 266.2,93.2 264.2,94.0 265.0,92.0 261.8,91.2 265.0,90.4 264.2,88.4 266.2,89.2" fill="#fff"/>
<polygon points="267.7,84.1 268.6,88.6 271.2,87.2 269.8,89.8 274.3,90.7 269.8,91.6 271.2,94.2 268.6,92.8 267.7,97.3 266.8,92.8 264.2,94.2 265.6,91.6 261.1,90.7 265.6,89.8 264.2,87.2 266.8,88.6" fill="#ffa800" filter="url(#sb2)"/>
<path d="M263 126.3 H251.3 V139 H253.4" fill="none" stroke="#1e7a1e" stroke-width="1.5"/>
<rect x="255.7" y="131.6" width="14.8" height="11.6" rx="1.5" fill="#8ab868" stroke="#1e7a1e" stroke-width="1.5"/>
<polygon points="268.8,121.0 269.6,124.0 271.6,123.2 270.8,125.2 273.8,126.0 270.8,126.8 271.6,128.8 269.6,128.0 268.8,131.0 268.0,128.0 266.0,128.8 266.8,126.8 263.8,126.0 266.8,125.2 266.0,123.2 268.0,124.0" fill="#fff"/>
<polygon points="269.3,119.8 270.2,123.2 272.5,122.2 271.5,124.5 274.9,125.4 271.5,126.3 272.5,128.6 270.2,127.6 269.3,131.0 268.4,127.6 266.1,128.6 267.1,126.3 263.7,125.4 267.1,124.5 266.1,122.2 268.4,123.2" fill="#e23a1e" filter="url(#sb2)"/>
<circle cx="269.3" cy="125.4" r="1.9" fill="#ffe070"/>
<circle cx="262.5" cy="169.1" r="11" fill="#fff"/><g clip-path="url(#cSph)" fill="#5a5a5a"><rect x="246.40" y="153.00" width="4.6" height="4.6"/><rect x="246.40" y="162.20" width="4.6" height="4.6"/><rect x="246.40" y="171.40" width="4.6" height="4.6"/><rect x="251.00" y="157.60" width="4.6" height="4.6"/><rect x="251.00" y="166.80" width="4.6" height="4.6"/><rect x="251.00" y="176.00" width="4.6" height="4.6"/><rect x="255.60" y="153.00" width="4.6" height="4.6"/><rect x="255.60" y="162.20" width="4.6" height="4.6"/><rect x="255.60" y="171.40" width="4.6" height="4.6"/><rect x="260.20" y="157.60" width="4.6" height="4.6"/><rect x="260.20" y="166.80" width="4.6" height="4.6"/><rect x="260.20" y="176.00" width="4.6" height="4.6"/><rect x="264.80" y="153.00" width="4.6" height="4.6"/><rect x="264.80" y="162.20" width="4.6" height="4.6"/><rect x="264.80" y="171.40" width="4.6" height="4.6"/><rect x="269.40" y="157.60" width="4.6" height="4.6"/><rect x="269.40" y="166.80" width="4.6" height="4.6"/><rect x="269.40" y="176.00" width="4.6" height="4.6"/></g><circle cx="262.5" cy="169.1" r="11.1" fill="none" stroke="#555" stroke-width="1.3"/>
<path d="M262.50 205.50 L257.15 196.23 A10.7 10.7 0 0 1 267.85 196.23 Z" fill="#fbb82e"/>
<path d="M262.50 205.50 L267.85 196.23 A10.7 10.7 0 0 1 273.20 205.50 Z" fill="#ff8a30"/>
<path d="M262.50 205.50 L273.20 205.50 A10.7 10.7 0 0 1 267.85 214.77 Z" fill="#e5484d"/>
<path d="M262.50 205.50 L267.85 214.77 A10.7 10.7 0 0 1 257.15 214.77 Z" fill="#7c4dff"/>
<path d="M262.50 205.50 L257.15 214.77 A10.7 10.7 0 0 1 251.80 205.50 Z" fill="#12b5cb"/>
<path d="M262.50 205.50 L251.80 205.50 A10.7 10.7 0 0 1 257.15 196.23 Z" fill="#3dc47a"/>
<path d="M261.8 235 L253 241.5 L261.8 248.3" fill="none" stroke="#8a8a8a" stroke-width="1.6" stroke-linejoin="miter"/>
<path d="M261 237.5 L255.5 241.5 L261 245.8 Z" fill="#e0e0e0"/>
<polygon points="264.3,236 271.5,230.4 271.5,246.7 264.3,252.8" fill="#5aa9e6"/>
<path d="M255.2 438.6 L268.2 451.6 M268.2 438.6 L255.2 451.6" stroke="#ff2a2a" stroke-width="3.6" stroke-linecap="round" fill="none"/>
<path d="M250.6 482.3 L255 476.8 V480.5 H261 V484.1 H255 V487.8 Z" fill="#111"/>
<circle cx="266.2" cy="482.3" r="6.3" fill="#a8c4e6" stroke="#2d4a80" stroke-width="1.2"/>
<path d="M250.4 553.8 Q256 546.4 262.4 546.4 Q269 546.4 274.4 553.8 Q269 561.2 262.4 561.2 Q256 561.2 250.4 553.8 Z" fill="#a0a0a0"/><circle cx="262.4" cy="553.8" r="4.6" fill="#f4f4f4"/><circle cx="262.4" cy="553.8" r="2.5" fill="#a0a0a0"/>
<rect x="250.9" y="647.6" width="9.4" height="9" fill="#5bc483" stroke="#4aaa70" stroke-width="1"/>
<rect x="265.1" y="647.7" width="8.6" height="8.8" fill="#f0f0f0" stroke="#666" stroke-width="1.2"/>
<rect x="251" y="661.5" width="8.6" height="8.6" fill="#f0f0f0" stroke="#666" stroke-width="1.2"/>
<rect x="265.1" y="661.5" width="8.6" height="8.6" fill="#f0f0f0" stroke="#666" stroke-width="1.2"/>
</svg>
<!--/MENU-->
</body>
</html>
